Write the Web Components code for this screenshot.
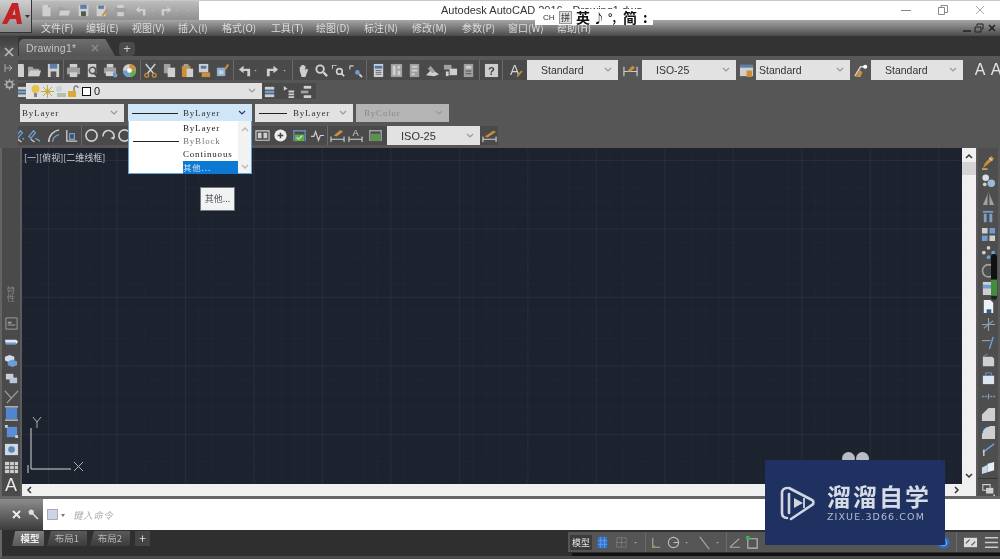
<!DOCTYPE html>
<html lang="zh">
<head>
<meta charset="utf-8">
<title>AutoCAD</title>
<style>
  html, body { margin: 0; padding: 0; overflow: hidden; background: #444; }
</style>
</head>
<body>
<cad-app></cad-app>
<script>
// icon drawings, all on a 16x16 box
const W = '#cfcfcf', G = '#a0a0a0', B = '#6d9dd2', O = '#c98f3a', D = '#3a3a3a', N = '#5fae4a';
const ICONS = {
  doc: `<path d="M3 1h7l3 3v11H3z" fill="${W}"/><path d="M10 1v3h3" fill="${G}"/>`,
  open: `<path d="M1 4h5l1 2h6v8H1z" fill="${G}"/><path d="M3 8h12l-2 6H1z" fill="${W}"/>`,
  save: `<path d="M2 1h12v14H2z" fill="${W}"/><path d="M4 1h8v5H4z" fill="#5b7fa8"/><path d="M5 9h6v6H5z" fill="#555"/>`,
  saveas: `<path d="M2 2h11v13H2z" fill="${W}"/><path d="M4 2h7v4H4z" fill="#5b7fa8"/><path d="M8 14l6-8 2 1-6 8z" fill="${O}"/>`,
  print: `<path d="M4 1h8v4H4z" fill="${W}"/><path d="M1 5h14v7H1z" fill="${G}"/><path d="M4 10h8v5H4z" fill="${W}"/>`,
  preview: `<path d="M3 1h9v14H3z" fill="${W}"/><circle cx="8" cy="8" r="3.4" fill="none" stroke="#555" stroke-width="1.6"/><path d="M10 11l3 3" stroke="#444" stroke-width="2"/>`,
  plot: `<path d="M4 1h7v4H4z" fill="${W}"/><path d="M1 5h13v6H1z" fill="${G}"/><path d="M3 9h8v5H3z" fill="${W}"/><circle cx="13" cy="13" r="2.4" fill="${B}"/>`,
  wheel: `<circle cx="8" cy="8" r="7" fill="${W}"/><path d="M8 1a7 7 0 0 1 7 7H8z" fill="${O}"/><path d="M15 8a7 7 0 0 1-7 7V8z" fill="${N}"/><path d="M8 15a7 7 0 0 1-7-7h7z" fill="${B}"/><circle cx="8" cy="8" r="2.5" fill="#fff"/>`,
  cut: `<path d="M3 1l8 10M13 1L5 11" stroke="${W}" stroke-width="1.6"/><circle cx="4" cy="13" r="2" fill="none" stroke="${O}" stroke-width="1.4"/><circle cx="12" cy="13" r="2" fill="none" stroke="${O}" stroke-width="1.4"/>`,
  copy: `<path d="M2 1h7v10H2z" fill="${G}"/><path d="M6 5h8v10H6z" fill="${W}"/>`,
  paste: `<path d="M2 3h9v12H2z" fill="${O}"/><path d="M4 1h5v3H4z" fill="${G}"/><path d="M7 6h7v9H7z" fill="${W}"/>`,
  match: `<path d="M2 1h10v9H2z" fill="${W}"/><path d="M4 3h6v3H4z" fill="#4a78b0"/><path d="M5 10h9v5H5z" fill="${O}"/>`,
  brush: `<path d="M2 5h9v9H2z" fill="#8fb0d8"/><path d="M4 8h5v4H4z" fill="${W}"/><path d="M10 6l3-5 2 1-3 5z" fill="${O}"/>`,
  undo: `<path d="M7 3L2 7l5 4V8.500h4V14h3V6H7z" fill="${W}"/>`,
  redo: `<path d="M9 3l5 4-5 4V8.500H5V14H2V6h7z" fill="${W}"/>`,
  caret: `<path d="M1 7h5l-2.500 3z" fill="#bbb"/>`,
  hand: `<path d="M4 8V4h1.500v3V2.500H7V7V2h1.500v5V3H10v5l1.500-2 1.500 1-3 8H6z" fill="${W}"/>`,
  zoom: `<circle cx="6.500" cy="6.500" r="4" fill="none" stroke="${W}" stroke-width="2"/><path d="M10 10l4 4" stroke="${W}" stroke-width="2.400"/>`,
  zwin: `<path d="M1 2h5v1H2v3H1z" fill="${W}"/><circle cx="9" cy="9" r="3" fill="none" stroke="${W}" stroke-width="1.800"/><path d="M11 11l3 3" stroke="${W}" stroke-width="2"/>`,
  zprev: `<path d="M2 3h4M2 3v4" stroke="${W}" stroke-width="1.200"/><circle cx="10" cy="10" r="2.500" fill="${B}"/><path d="M12 12l3 3" stroke="${W}" stroke-width="2"/>`,
  props: `<path d="M3 1h10v14H3z" fill="${W}"/><path d="M4 3h8v3H4z" fill="#3e78bb"/><path d="M5 8h6M5 10h6M5 12h6" stroke="#666"/>`,
  design: `<path d="M2 1h12v14H2z" fill="${G}"/><path d="M4 3h3v10H4zM9 3h3v3H9zM9 8h3v5H9z" fill="${W}"/>`,
  tool: `<path d="M3 1h10v14H3z" fill="${G}"/><path d="M5 3h6v2H5zM5 7h6v2H5zM5 11h3v2H5z" fill="${W}"/>`,
  sheet: `<path d="M1 13l6-6 8 5-5 2z" fill="${W}"/><path d="M6 3l5 6-3 2-5-5z" fill="${G}"/>`,
  markup: `<path d="M1 2h8v5H1z" fill="${G}"/><path d="M7 6h8v7H7z" fill="${W}"/><path d="M3 9h3v5H3z" fill="${W}"/>`,
  calc: `<path d="M3 1h10v14H3z" fill="${G}"/><path d="M5 3h6v3H5z" fill="${W}"/><path d="M5 8h6v1H5zM5 11h6v1H5z" fill="#555"/>`,
  help: `<path d="M1 1h14v14H1z" fill="${W}"/><text x="8" y="13" font-size="12" font-weight="700" font-family="Liberation Sans" text-anchor="middle" fill="#444">?</text>`,
  tstyle: `<text x="7" y="13" font-size="15" font-family="Liberation Sans" text-anchor="middle" fill="${W}">A</text><path d="M9 14l5-6 1.500 1-5 6z" fill="${O}"/>`,
  dstyle: `<path d="M1 4v10M15 4v10M1 9h14" stroke="${W}" stroke-width="1.200"/><path d="M4 9l6-6 3 2-5 4z" fill="${O}"/>`,
  tstyle2: `<path d="M1 2h14v12H1z" fill="${W}"/><path d="M1 2h14v3H1z" fill="#5b7fa8"/><path d="M8 8l6 0 0 7-6 0z" fill="${O}"/>`,
  mstyle: `<path d="M2 14L8 4h5" fill="none" stroke="${W}" stroke-width="1.600"/><circle cx="13" cy="4" r="2.200" fill="#fff"/><path d="M3 15l4-8 3 3-2 5z" fill="${O}"/>`,
  lstate: `<path d="M2 3h10v3H2z" fill="${W}"/><path d="M2 7h10v3H2z" fill="${B}"/><path d="M2 11h10v3H2z" fill="${W}"/>`,
  lprev: `<path d="M3 2l4 3-4 2z" fill="${W}"/><path d="M8 7h6v2H8zM8 10h6v2H8zM8 13h6v2H8z" fill="${W}"/>`,
  lmake: `<path d="M5 2h8v3H5z" fill="${W}"/><path d="M2 7h8v3H2z" fill="${G}"/><path d="M5 12h8v3H5z" fill="${W}"/>`,
  dlin: `<path d="M2 9l5-6 2 2-5 6zM9 11l5 3" stroke="${B}" stroke-width="1.400" fill="none"/><path d="M4 12l4 3" stroke="${W}" stroke-width="1.400"/>`,
  darc: `<path d="M3 15C3 8 8 3 14 2" fill="none" stroke="${W}" stroke-width="1.600"/><path d="M7 15c0-4 3-7 7-8" fill="none" stroke="${B}" stroke-width="1.400"/>`,
  dord: `<path d="M3 2v12h11" fill="none" stroke="${W}" stroke-width="1.400"/><path d="M6 6h5v6H6z" fill="none" stroke="${B}" stroke-width="1.400"/>`,
  circ: `<circle cx="8" cy="8" r="6" fill="none" stroke="${W}" stroke-width="1.800"/>`,
  arc2: `<path d="M2 9a6 6 0 1 1 11 3" fill="none" stroke="${W}" stroke-width="1.800"/><path d="M13 12l-3-1 3-2z" fill="${W}"/>`,
  box50: `<path d="M1 3h14v10H1z" fill="none" stroke="${W}" stroke-width="1.200"/><path d="M3 5h4v6H3zM9 5h4v6H9z" fill="${W}"/>`,
  cplus: `<circle cx="8" cy="8" r="6.500" fill="#eee"/><path d="M5 8h6M8 5v6" stroke="#444" stroke-width="1.600"/>`,
  check: `<path d="M2 2v12M14 2v12M2 3h12" stroke="${B}" stroke-width="1.200"/><path d="M3 7h10v7H3z" fill="${N}"/><path d="M5 10l2 2 4-4" fill="none" stroke="#cde" stroke-width="1.200"/>`,
  wave: `<path d="M1 9h3l2-5 3 9 2-5h4" fill="none" stroke="${W}" stroke-width="1.300"/>`,
  dedit: `<path d="M1 9v6M15 9v6M1 12h14" stroke="${W}" stroke-width="1.200"/><path d="M4 8l7-6 3 2-7 5z" fill="${O}"/>`,
  dtext: `<path d="M1 9v6M15 9v6M1 12h14" stroke="${W}" stroke-width="1.200"/><text x="8" y="9" font-size="10" font-family="Liberation Sans" text-anchor="middle" fill="${W}">A</text>`,
  dupd: `<path d="M2 2v12M14 2v12M2 3h12" stroke="${W}" stroke-width="1"/><path d="M3 6h10v8H3z" fill="#5d9150"/>`,
  dlast: `<path d="M1 9v6M15 9v6M1 12h14" stroke="${W}" stroke-width="1.200"/><path d="M3 9l9-6 3 1-9 6z" fill="${O}"/>`,
  // docks
  cloud: `<path d="M1 6h12l2 2-2 3H2z" fill="#dfe8f2"/><path d="M2 10h11" stroke="${B}" stroke-width="2"/>`,
  cubes: `<path d="M6 2l5 2v4l-5 2-5-2V4z" fill="#cfdced"/><path d="M9 7l5 2v4l-5 2-5-2V9z" fill="${B}"/>`,
  blocks: `<path d="M2 3h8v6H2z" fill="${W}"/><path d="M6 7h8v6H6z" fill="#b5c8dd"/>`,
  xline: `<path d="M1 2l7 8M15 2L3 15" stroke="${G}" stroke-width="1.300"/>`,
  rect1: `<path d="M2 2h12v12H2z" fill="#4f86cf"/><path d="M1 1h14M1 15h14" stroke="${W}" stroke-width="1.400"/>`,
  rect2: `<path d="M3 3h11v11H3z" fill="#5a8fd6"/><path d="M1 1h3v3H1zM12 12h3v3h-3z" fill="${W}"/>`,
  photo: `<path d="M1 2h14v12H1z" fill="#cfd8e3"/><circle cx="8" cy="8" r="3.500" fill="#5c86b5"/>`,
  table: `<path d="M1 2h14v12H1z" fill="${W}"/><path d="M1 6h14M1 10h14M6 2v12M11 2v12" stroke="#555"/>`,
  pal: `<path d="M2 2h12v12H2z" fill="none" stroke="${G}"/><path d="M4 6h4v2H4zM4 9h8v1H4z" fill="${G}"/>`,
  pencil: `<path d="M2 14l2-5 7-8 3 3-8 7z" fill="${O}"/><path d="M9 3l3 3" stroke="${W}" stroke-width="1.500"/><path d="M1 15h6" stroke="#d9c34a" stroke-width="1.500"/>`,
  spots: `<circle cx="5" cy="5" r="3.500" fill="#d8dee6"/><circle cx="11" cy="11" r="4" fill="#9db9da"/><circle cx="4" cy="12" r="2" fill="${W}"/>`,
  tri: `<path d="M8 1l6 14H9V5zM8 1L2 15h5V5z" fill="${G}"/>`,
  array: `<path d="M3 5h3v9H3zM9 5h3v9H9z" fill="#7f9fc5"/><path d="M2 2h11v2H2z" fill="${B}"/>`,
  grid4: `<path d="M1 1h6v6H1zM9 9h6v6H9z" fill="${W}"/><path d="M9 1h6v6H9zM1 9h6v6H1z" fill="${B}"/>`,
  move: `<circle cx="8" cy="3" r="2" fill="${W}"/><circle cx="3" cy="8" r="2" fill="${W}"/><circle cx="13" cy="8" r="2" fill="${B}"/><circle cx="8" cy="13" r="2" fill="${B}"/>`,
  rot: `<path d="M13 4a6.500 6.500 0 1 0 1 7" fill="none" stroke="${G}" stroke-width="1.800"/>`,
  sheet2: `<path d="M2 1h12v14H2z" fill="${W}"/><path d="M2 4h12v4H2z" fill="${B}"/>`,
  page: `<path d="M3 1h7l3 3v11H3z" fill="#eef2f7"/><path d="M6 11h5v4H6z" fill="#335f95"/>`,
  flat: `<path d="M2 4h10l2 2v8H2z" fill="${W}"/><path d="M2 4l5-3" stroke="${B}"/>`,
  flat2: `<path d="M2 5h12v9H2z" fill="#dce6f1"/><path d="M5 5V2h6v3" fill="none" stroke="${B}"/>`,
  dash: `<path d="M1 8h14" stroke="${B}" stroke-width="1.400" stroke-dasharray="2 1"/><path d="M8 5v6" stroke="${G}"/>`,
  cham: `<path d="M1 15V8l7-7h7v14z" fill="${W}"/>`,
  fill: `<path d="M1 15V9a8 8 0 0 1 8-8h6v14z" fill="${W}"/><path d="M1 9a8 8 0 0 1 8-8" fill="none" stroke="#2f5e92" stroke-width="1.500"/>`,
  mix: `<path d="M2 11l8-6 4-3" stroke="${B}" stroke-width="1.800"/><path d="M3 8v7" stroke="${W}" stroke-width="1.500"/>`,
  three: `<path d="M1 8l6-3v8l-6 2z" fill="#c6d7ea"/><path d="M7 4l7-2v9l-7 2z" fill="#e6eef7"/>`,
  stack: `<path d="M1 2h9v7H1z" fill="none" stroke="${W}" stroke-width="1.300"/><path d="M5 6h9v7H5z" fill="${W}"/><path d="M14 14h2v2h-2z" fill="${W}"/>`,
  yline: `<path d="M8 1v14M1 8h14" stroke="${G}" stroke-width="1.200"/><path d="M3 12L13 4" stroke="${B}" stroke-width="1.200"/>`,
  zline: `<path d="M1 6h9" stroke="${G}" stroke-width="1.200"/><path d="M13 2L9 15" stroke="${B}" stroke-width="1.600"/>`,
  // status bar
  sgrid: `<path d="M3 2h10v12H3z" fill="#2f74d0"/><path d="M3 6h10M3 10h10M6 2v12M10 2v12" stroke="#6aa2e8" stroke-width=".8"/>`,
  ssnap: `<path d="M3 3h10v10H3z" fill="none" stroke="#999" stroke-dasharray="1 1"/><path d="M3 8h10M8 3v10" stroke="#999" stroke-dasharray="1 1"/>`,
  sortho: `<path d="M4 3v10h8" fill="none" stroke="#aaa" stroke-width="1.200"/><path d="M4 13h2v-2" stroke="${O}" fill="none"/>`,
  spolar: `<circle cx="8" cy="8" r="5.500" fill="none" stroke="#bbb" stroke-width="1.200"/><path d="M8 8h5" stroke="#bbb" stroke-width="1.200"/>`,
  siso: `<path d="M3 2l10 13" stroke="#aaa" stroke-width="1.200"/>`,
  sang: `<path d="M2 13L12 4M2 13h11" fill="none" stroke="#aaa" stroke-width="1.100"/>`,
  sbox: `<path d="M3 4h10v10H3z" fill="none" stroke="#bbb" stroke-width="1.200"/><path d="M1 1h4v4H1z" fill="#37b24d"/>`,
  sfull: `<path d="M1 3h14v10H1z" fill="#ddd"/><path d="M3 9l4-4M9 11l4-4" stroke="#555" stroke-width="1.300"/>`,
  smenu: `<path d="M1 3h14M1 8h14M1 13h14" stroke="#ccc" stroke-width="1.600"/>`,
  sblue: `<circle cx="8" cy="8" r="6.500" fill="#2870c8"/><circle cx="8" cy="8" r="3.500" fill="none" stroke="#7eb0ea"/>`
};

class CadIcon extends HTMLElement {
  connectedCallback() {
    const w = this.getAttribute('w') || 18;
    const h = this.getAttribute('h');
    const s = this.getAttribute('s') || 15;
    this.attachShadow({ mode: 'open' });
    this.shadowRoot.innerHTML = `
      <style>
        :host { display: flex; flex: none; align-items: center; justify-content: center; width: ${w}px; height: ${h ? h + 'px' : '100%'}; overflow: hidden; }
        svg { flex: none; display: block; }
      </style>
      <svg width="${s}" height="${s}" viewBox="0 0 16 16">${ICONS[this.getAttribute('name')] || ''}</svg>
    `;
  }
}
customElements.define('cad-icon', CadIcon);

// strip of icons: "name:size name:size", sep = thin divider, gap = empty space
class CadIconbar extends HTMLElement {
  connectedCallback() {
    const s = this.getAttribute('s') || 15;
    const column = this.getAttribute('dir') === 'column';
    const html = this.getAttribute('items').trim().split(/\s+/).map(t => {
      const [n, w] = t.split(':');
      if (n === 'sep') return `<i class="sep" style="width:${w}px"></i>`;
      if (n === 'gap') return `<i style="width:${w}px;flex:none"></i>`;
      if (column) return `<cad-icon name="${n}" w="20" h="${w}" s="${s}"></cad-icon>`;
      return `<cad-icon name="${n}" w="${w}" s="${n === 'caret' ? 7 : s}"></cad-icon>`;
    }).join('');
    this.attachShadow({ mode: 'open' });
    this.shadowRoot.innerHTML = `
      <style>
        :host { display: flex; flex: none; height: ${column ? 'auto' : '100%'}; flex-direction: ${column ? 'column' : 'row'}; }
        .sep { flex: none; position: relative; }
        .sep::after { content: ''; display: block; width: 1px; height: 100%; margin: 0 auto; background: #6a6a6a; }
      </style>
      ${html}
    `;
  }
}
customElements.define('cad-iconbar', CadIconbar);

class CadCombo extends HTMLElement {
  connectedCallback() {
    const w = this.getAttribute('w');
    const state = this.getAttribute('state') || '';
    const bg = state === 'open' ? '#cfe6f8' : state === 'off' ? '#b4b4b4' : '#e2e2e2';
    const col = state === 'off' ? '#888' : '#333';
    this.attachShadow({ mode: 'open' });
    this.shadowRoot.innerHTML = `
      <style>
        :host { display: flex; flex: none; width: ${w}px; height: 100%; box-sizing: border-box; align-items: center; background: ${bg}; color: ${col}; padding-left: ${this.getAttribute('pad') || 4}px; font: ${this.getAttribute('font') || '10.500px "Liberation Sans"'}; letter-spacing: ${this.getAttribute('ls') || 0}px; white-space: nowrap; }
        .body { flex: 1; display: flex; align-items: center; min-width: 0; }
        svg { flex: none; margin-right: 6px; }
      </style>
      <div class="body"><slot></slot></div>
      <svg width="8" height="6" viewBox="0 0 8 6"><path d="M1 1l3 3 3-3" fill="none" stroke="${state === 'open' ? '#336' : '#999'}" stroke-width="1.200"/></svg>
    `;
  }
}
customElements.define('cad-combo', CadCombo);

class CadTitlebar extends HTMLElement {
  connectedCallback() {
    this.attachShadow({ mode: 'open' });
    this.shadowRoot.innerHTML = `
      <style>
        :host { display: flex; flex: none; height: 20px; background: #fff; border-top: 1px solid #c8c8c8; box-sizing: border-box; }
        .qat { flex: none; box-sizing: border-box; width: 199px; padding-left: 37px; background: linear-gradient(#bdbdbd, #8f8f8f); display: flex; height: 19px; }
        .title { flex: 1; font: 11px "Liberation Sans"; color: #333; padding-left: 242px; line-height: 18px; white-space: nowrap; overflow: hidden; }
        .btns { display: flex; flex: none; width: 113px; color: #999; }
        .btns span { width: 37px; text-align: center; font: 13px/18px "Liberation Sans"; }
        svg { display: block; margin: 4px auto; }
      </style>
      <div class="qat"><cad-iconbar s="13" items="doc:18 open:19 save:18 saveas:19 print:19 undo:20 caret:8 redo:16 caret:9 caret:12"></cad-iconbar></div>
      <div class="title">Autodesk AutoCAD 2016 - Drawing1.dwg</div>
      <div class="btns">
        <span><svg width="10" height="10"><path d="M0 5.500h10" stroke="#888"/></svg></span>
        <span><svg width="10" height="10"><path d="M.5 2.500h6v7h-6zM3 2.500V.5h6.500v7H7" fill="none" stroke="#888"/></svg></span>
        <span><svg width="10" height="10"><path d="M1 1l8 8M9 1L1 9" stroke="#aaa"/></svg></span>
      </div>
    `;
  }
}
customElements.define('cad-titlebar', CadTitlebar);

class CadMenubar extends HTMLElement {
  connectedCallback() {
    const items = [['文件(F)', 45], ['编辑(E)', 46], ['视图(V)', 46], ['插入(I)', 44], ['格式(O)', 49], ['工具(T)', 45], ['绘图(D)', 48], ['标注(N)', 48], ['修改(M)', 50], ['参数(P)', 46], ['窗口(W)', 49], ['帮助(H)', 47]];
    this.attachShadow({ mode: 'open' });
    this.shadowRoot.innerHTML = `
      <style>
        :host { display: flex; flex: none; height: 16px; align-items: center; padding: 0 0 1px 41px; box-sizing: border-box; background: linear-gradient(#a6a6a6, #4a4a4a); font: 10px "Noto Sans CJK SC", "Liberation Sans", sans-serif; color: #dcdcdc; white-space: nowrap; }
        span { flex: none; }
        .ctl { margin-left: auto; display: flex; gap: 2px; padding-right: 3px; }
      </style>
      ${items.map(([t, w]) => `<span style="width:${w}px">${t}</span>`).join('')}
      <div class="ctl">
        <svg width="10" height="10"><path d="M1 8h8" stroke="#222" stroke-width="1.500"/></svg>
        <svg width="11" height="10"><path d="M1 4h6v5H1zM3 3V1h6v5H8" fill="none" stroke="#222"/></svg>
        <svg width="10" height="10"><path d="M2 2l6 6M8 2L2 8" stroke="#222" stroke-width="1.600"/></svg>
      </div>
    `;
  }
}
customElements.define('cad-menubar', CadMenubar);

class CadTabs extends HTMLElement {
  connectedCallback() {
    this.attachShadow({ mode: 'open' });
    this.shadowRoot.innerHTML = `
      <style>
        :host { display: flex; flex: none; height: 24px; align-items: flex-end; box-sizing: border-box; padding: 0 0 4px 1px; gap: 4px; background: linear-gradient(#333 0, #333 20px, #585858 20px); font: 10.500px "Liberation Sans"; color: #c4c4c4; }
        .tab { width: 96px; height: 17px; box-sizing: border-box; padding: 0 0 0 7px; display: flex; align-items: center; justify-content: space-between; background: linear-gradient(#6e6e6e, #555); border-radius: 5px 5px 0 0; clip-path: polygon(0 0, 90% 0, 100% 100%, 0 100%); letter-spacing: .2px; }
        .tab svg { margin-right: 16px; }
        .plus { width: 16px; height: 14px; background: #4a4a4a; border-radius: 4px; text-align: center; line-height: 13px; font-size: 13px; color: #ccc; }
      </style>
      <div class="tab">Drawing1*<svg width="8" height="8"><path d="M1 1l6 6M7 1L1 7" stroke="#888" stroke-width="1.600"/></svg></div>
      <div class="plus">+</div>
    `;
  }
}
customElements.define('cad-tabs', CadTabs);

class CadToolbars extends HTMLElement {
  connectedCallback() {
    const mono = '9px "Liberation Serif"';
    this.attachShadow({ mode: 'open' });
    this.shadowRoot.innerHTML = `
      <style>
        :host { display: flex; flex-direction: column; flex: none; height: 88px; box-sizing: border-box; padding-bottom: 2px; background: #565656; }
        .row { display: flex; flex: none; }
        .r1 { height: 20px; }
        .r2 { height: 16px; margin-top: 3px; }
        .r3 { height: 18px; margin-top: 5px; padding-left: 2px; }
        .r4 { height: 19px; margin-top: 4px; }
        .dark { display: flex; height: 100%; background: #4a4a4a; }
        .a { color: #e4e4e4; font: 16px "Liberation Sans"; width: 16px; text-align: center; line-height: 20px; flex: none; }
        .lyr { display: flex; align-items: center; gap: 0; font: 11px "Liberation Sans"; color: #222; }
        .sq { width: 7px; height: 7px; border: 1px solid #111; background: #fff; margin: 0 3px 0 2px; }
        .line { display: inline-block; width: 46px; height: 1px; background: #222; margin-right: 5px; flex: none; }
        .line.s { width: 28px; margin-right: 6px; }
      </style>
      <div class="row r1">
        <div class="dark">
          <cad-iconbar items="doc:6 open:20 save:18 sep:2 print:19 preview:18 plot:18 wheel:20 sep:2 cut:19 copy:18 paste:18 match:17 brush:19 sep:2 undo:20 caret:7 redo:22 caret:7 sep:4 hand:19 zoom:17 zwin:17 zprev:17 sep:5 props:18 design:18 tool:18 sheet:18 markup:18 calc:18 sep:4 help:20 sep:3"></cad-iconbar>
          <cad-icon name="tstyle" w="23"></cad-icon>
        </div>
        <cad-combo w="91" pad="14">Standard</cad-combo>
        <cad-icon name="dstyle" w="24"></cad-icon>
        <cad-combo w="94" pad="14">ISO-25</cad-combo>
        <cad-icon name="tstyle2" w="20"></cad-icon>
        <cad-combo w="94" pad="3">Standard</cad-combo>
        <cad-icon name="mstyle" w="21"></cad-icon>
        <cad-combo w="92" pad="14">Standard</cad-combo>
        <span class="a" style="margin-left:9px">A</span>
        <span class="a" style="width:16px">A</span>
      </div>
      <div class="row r2">
        <div class="dark">
          <cad-icon name="lstate" w="8"></cad-icon>
          <cad-combo w="236" pad="4">
            <span class="lyr">
              <svg width="11" height="14" viewBox="0 0 11 14"><circle cx="5.500" cy="5" r="4" fill="#e8c34a"/><path d="M4 9h3v4H4z" fill="#888"/></svg>
              <svg width="13" height="13" viewBox="0 0 13 13"><circle cx="6.500" cy="6.500" r="3" fill="#e6cf7a"/><path d="M6.500 0v13M0 6.500h13M2 2l9 9M11 2l-9 9" stroke="#c2a94e"/></svg>
              <svg width="13" height="13" viewBox="0 0 13 13"><circle cx="5" cy="4" r="3" fill="#c9d1d8"/><path d="M3 8h9v4H3z" fill="#b5c2a8"/></svg>
              <svg width="13" height="13" viewBox="0 0 13 13"><path d="M1 6h8v6H1z" fill="#d8a93c"/><path d="M7 6V3a2 2 0 0 1 4 0" fill="none" stroke="#777" stroke-width="1.300"/></svg>
              <i class="sq"></i>0
            </span>
          </cad-combo>
          <cad-iconbar items="lstate:17 lprev:18 lmake:19"></cad-iconbar>
        </div>
      </div>
      <div class="row r3">
        <cad-combo w="104" pad="2" font='${mono}' ls=".8">ByLayer</cad-combo>
        <cad-combo w="124" pad="4" font='${mono}' ls=".8" state="open" style="margin-left:4px"><i class="line"></i><span>ByLayer</span></cad-combo>
        <cad-combo w="98" pad="4" font='${mono}' ls=".8" style="margin-left:3px"><i class="line s"></i><span>ByLayer</span></cad-combo>
        <cad-combo w="93" pad="8" font='${mono}' ls=".8" state="off" style="margin-left:3px">ByColor</cad-combo>
      </div>
      <div class="row r4">
        <div class="dark">
          <cad-iconbar items="dlin:6 dlin:20 darc:18 dord:18 sep:3 circ:17 arc2:16 circ:16 gap:122 box50:17 cplus:19 check:18 wave:18 sep:2 dedit:18 dtext:19 dupd:20 gap:2"></cad-iconbar>
          <cad-combo w="93" pad="14" font='11px "Liberation Sans"'>ISO-25</cad-combo>
          <cad-icon name="dlast" w="18"></cad-icon>
        </div>
      </div>
    `;
  }
}
customElements.define('cad-toolbars', CadToolbars);

class CadPalette extends HTMLElement {
  connectedCallback() {
    this.attachShadow({ mode: 'open' });
    this.shadowRoot.innerHTML = `
      <style>
        :host { display: flex; flex: none; width: 18px; flex-direction: column; align-items: center; box-sizing: border-box; padding-top: 11px; gap: 6px; background: linear-gradient(#3c3c3c, #565656 16px); }
        svg { display: block; }
      </style>
      <svg width="10" height="10"><path d="M1 1l8 8M9 1L1 9" stroke="#bbb" stroke-width="1.600"/></svg>
      <svg width="10" height="10"><path d="M1 1v8M1 5h6M5 2l3 3-3 3" fill="none" stroke="#aaa"/></svg>
      <svg width="11" height="11" viewBox="0 0 16 16"><circle cx="8" cy="8" r="4.500" fill="none" stroke="#aaa" stroke-width="2.500"/><path d="M8 0v16M0 8h16M2 2l12 12M14 2L2 14" stroke="#aaa" stroke-width="1.500" stroke-dasharray="3 10"/></svg>
    `;
  }
}
customElements.define('cad-palette', CadPalette);

class CadDock extends HTMLElement {
  connectedCallback() {
    this.attachShadow({ mode: 'open' });
    this.shadowRoot.innerHTML = `
      <style>
        :host { display: flex; flex: none; flex-direction: column; align-items: center; box-sizing: border-box; }
      </style>
      <slot></slot>
    `;
  }
}
customElements.define('cad-dock', CadDock);

class CadViewport extends HTMLElement {
  connectedCallback() {
    this.attachShadow({ mode: 'open' });
    this.shadowRoot.innerHTML = `
      <style>
        :host { display: block; position: relative; flex: 1; overflow: hidden;
          background-color: #1d232e;
          background-image:
            linear-gradient(90deg, rgba(160,180,200,.05) 1px, transparent 1px),
            linear-gradient(rgba(160,180,200,.05) 1px, transparent 1px),
            linear-gradient(90deg, rgba(160,180,200,.018) 1px, transparent 1px),
            linear-gradient(rgba(160,180,200,.018) 1px, transparent 1px);
          background-size: 68.500px 68.500px, 68.500px 68.500px, 13.700px 13.700px, 13.700px 13.700px;
          background-position: 26px 12px, 26px 12px, 26px 12px, 26px 12px; }
        .label { position: absolute; left: 2px; top: 3px; font: 9px "Noto Sans CJK SC", sans-serif; color: #c8ccd2; white-space: nowrap; }
        .ucs { position: absolute; left: 4px; bottom: 6px; }
      </style>
      <div class="label">[一][俯视][二维线框]</div>
      <svg class="ucs" width="66" height="62" viewBox="0 0 66 62">
        <path d="M5 12v41h40" fill="none" stroke="#d4d6d8"/>
        <path d="M2 49v8" stroke="#d4d6d8"/>
        <path d="M7 1l4 5 4-5M11 6v6" fill="none" stroke="#aab0b6"/>
        <path d="M48 46l9 9M57 46l-9 9" stroke="#aab0b6"/>
      </svg>
    `;
  }
}
customElements.define('cad-viewport', CadViewport);

class CadWorkspace extends HTMLElement {
  connectedCallback() {
    const ar = (d) => `<svg width="8" height="8" viewBox="0 0 8 8"><path d="${d}" fill="none" stroke="#333" stroke-width="1.500"/></svg>`;
    this.attachShadow({ mode: 'open' });
    this.shadowRoot.innerHTML = `
      <style>
        :host { display: flex; flex: none; height: 348px; background: #5a5a5a; }
        .ld { width: 22px; padding-top: 138px; background: #4a4a4a; border-left: 2px solid #636363; border-right: 2px solid #5c5c5c; }
        .main { flex: 1; min-width: 0; display: flex; flex-direction: column; }
        .top { flex: 1; display: flex; min-height: 0; }
        .vs { flex: none; width: 14px; background: #f0f0f0; display: flex; flex-direction: column; align-items: center; justify-content: space-between; padding: 4px 0; box-sizing: border-box; position: relative; }
        .vs::after { content: ''; position: absolute; left: 0; right: 0; top: 14px; height: 13px; background: #d4d4d4; }
        .hs { flex: none; height: 12px; background: #f0f0f0; display: flex; align-items: center; justify-content: space-between; padding: 0 15px 0 3px; }
        .rd { width: 20px; margin: 0 2px; background: #4e4e4e; padding-top: 5px; position: relative; }
        .label { writing-mode: vertical-rl; font: 8px "Noto Sans CJK SC", sans-serif; color: #8a8a8a; height: 24px; margin-bottom: 4px; flex: none; }
        .cap { position: absolute; left: 13px; top: 106px; width: 6px; height: 46px; border-radius: 4px; background: linear-gradient(#111 0, #111 55%, #3d8f3d 56%, #3d8f3d 90%, #222 91%); }
        .sep2 { width: 100%; height: 1px; background: #333; margin: 1px 0 3px; flex: none; }
      </style>
      <cad-dock class="ld">
        <div class="label">特性</div>
        <cad-iconbar dir="column" s="15" items="pal:18 cloud:19 cubes:18 blocks:18 xline:18 rect1:17 rect2:18 photo:18 table:18"></cad-iconbar>
        <div style="font:18px 'Liberation Sans';color:#e8e8e8;line-height:18px;flex:none">A</div>
      </cad-dock>
      <div class="main">
        <div class="top">
          <cad-viewport></cad-viewport>
          <div class="vs">${ar('M1 6l3-3 3 3')}${ar('M1 2l3 3 3-3')}</div>
        </div>
        <div class="hs">${ar('M6 1L3 4l3 3')}${ar('M2 1l3 3-3 3')}</div>
      </div>
      <cad-dock class="rd">
        <cad-iconbar dir="column" s="15" items="pencil:18 spots:18 tri:18 array:18 grid4:18 move:18 rot:18 sheet2:18 page:18 yline:18 zline:18 flat:18 flat2:18 dash:18 cham:18 fill:18 mix:17 three:19"></cad-iconbar>
        <div class="sep2"></div>
        <cad-icon name="stack" w="20" h="14" s="13"></cad-icon>
        <div class="cap"></div>
      </cad-dock>
    `;
  }
}
customElements.define('cad-workspace', CadWorkspace);

class CadCommand extends HTMLElement {
  connectedCallback() {
    this.attachShadow({ mode: 'open' });
    this.shadowRoot.innerHTML = `
      <style>
        :host { display: flex; flex: none; height: 34px; box-sizing: border-box; padding-top: 3px; background: #666; }
        .grip { flex: none; width: 43px; padding-left: 12px; box-sizing: border-box; display: flex; align-items: center; gap: 7px; background: linear-gradient(#8c8c8c, #3c3c3c); }
        .input { flex: 1; background: #fff; display: flex; align-items: center; padding-left: 4px; font: italic 9.500px "Noto Sans CJK SC", sans-serif; color: #aaa; letter-spacing: .6px; }
        .pr { width: 11px; height: 11px; background: #cdd4e6; border: 1px solid #aab; box-sizing: border-box; margin-right: 2px; flex: none; }
        .c { width: 0; height: 0; border: 2.500px solid transparent; border-top: 3px solid #777; margin: 3px 8px 0 1px; flex: none; }
      </style>
      <div class="grip">
        <svg width="9" height="9"><path d="M1 1l7 7M8 1L1 8" stroke="#eee" stroke-width="1.800"/></svg>
        <svg width="11" height="11" viewBox="0 0 11 11"><path d="M10 10L4 4M2 1l3 1 0 3-3 0-1-3" fill="#ddd" stroke="#ddd" stroke-width="1.500"/></svg>
      </div>
      <div class="input"><i class="pr"></i><i class="c"></i>键入命令</div>
    `;
  }
}
customElements.define('cad-command', CadCommand);

class CadStatus extends HTMLElement {
  connectedCallback() {
    this.attachShadow({ mode: 'open' });
    this.shadowRoot.innerHTML = `
      <style>
        :host { display: flex; flex: none; height: 29px; background: #2f2f2f; font: 9.500px "Noto Sans CJK SC", sans-serif; color: #b8b8b8; box-sizing: border-box; border-left: 2px solid #666; border-bottom: 3px solid #4a4a4a; }
        .tabs { display: flex; gap: 3px; height: 15px; padding: 1px 0 0 10px; flex: none; }
        .t { width: 40px; text-align: center; background: linear-gradient(#5a5a5a, #3c3c3c); clip-path: polygon(10% 0, 100% 0, 100% 100%, 0 100%); line-height: 15px; }
        .t.on { background: linear-gradient(#7c7c7c, #5a5a5a); color: #eee; font-weight: 700; width: 28px; padding-left: 4px; }
        .p { width: 15px; text-align: center; background: #444; color: #ddd; font-size: 12px; line-height: 14px; margin-left: 2px; }
        .r { margin-left: auto; width: 432px; flex: none; display: flex; flex-direction: column; }
        .bar { height: 20px; margin-top: 2px; background: #555; display: flex; align-items: center; }
        .m { width: 22px; margin: 0 1px 0 2px; background: #3c3c3c; color: #e4e4e4; font-size: 9px; line-height: 15px; text-align: center; flex: none; }
        .blk { height: 3px; margin: 1px 0 0 4px; background: #111; }
      </style>
      <div class="tabs">
        <div class="t on">模型</div>
        <div class="t">布局1</div>
        <div class="t">布局2</div>
        <div class="p">+</div>
      </div>
      <div class="r">
        <div class="bar">
          <span class="m">模型</span>
          <cad-iconbar items="sgrid:18 ssnap:20 caret:12 sep:4 sortho:18 spolar:17 caret:12 siso:20 caret:10 sep:4 sang:14 sbox:21 gap:170 sblue:20 sep:6 sfull:22 smenu:20"></cad-iconbar>
        </div>
        <div class="blk"></div>
      </div>
    `;
  }
}
customElements.define('cad-status', CadStatus);

// the open linetype list
class CadDropdown extends HTMLElement {
  connectedCallback() {
    this.attachShadow({ mode: 'open' });
    this.shadowRoot.innerHTML = `
      <style>
        :host { position: absolute; left: 128px; top: 121px; width: 124px; height: 53px; box-sizing: border-box; background: #fff; border: 1px solid #5aa7e0; border-top: 0; display: flex; font: 9px "Liberation Serif"; letter-spacing: .8px; color: #222; }
        .list { flex: 1; display: flex; flex-direction: column; padding-top: 1px; }
        .it { height: 13px; line-height: 13px; display: flex; flex: none; }
        .ln { width: 54px; flex: none; position: relative; }
        .ln i { position: absolute; left: 4px; right: 4px; top: 6px; height: 1px; background: #222; }
        .tx { flex: 1; padding-left: 0; }
        .sel { background: #0b78d4; color: #cfe4f6; font-family: "Noto Sans CJK SC", sans-serif; font-size: 8.500px; }
        .sb { width: 13px; flex: none; background: #f2f2f2; display: flex; flex-direction: column; align-items: center; justify-content: space-between; padding: 5px 0 3px; box-sizing: border-box; }
      </style>
      <div class="list">
        <div class="it"><span class="ln"></span><span class="tx">ByLayer</span></div>
        <div class="it"><span class="ln"><i></i></span><span class="tx" style="color:#777">ByBlock</span></div>
        <div class="it"><span class="ln"></span><span class="tx">Continuous</span></div>
        <div class="it"><span class="ln"></span><span class="tx sel">其他...</span></div>
      </div>
      <div class="sb">
        <svg width="8" height="6"><path d="M1 5l3-3 3 3" fill="none" stroke="#bbb" stroke-width="1.500"/></svg>
        <svg width="8" height="6"><path d="M1 1l3 3 3-3" fill="none" stroke="#bbb" stroke-width="1.500"/></svg>
      </div>
    `;
  }
}
customElements.define('cad-dropdown', CadDropdown);

class CadTooltip extends HTMLElement {
  connectedCallback() {
    this.attachShadow({ mode: 'open' });
    this.shadowRoot.innerHTML = `
      <style>
        :host { position: absolute; left: 200px; top: 187px; width: 35px; height: 24px; background: #f0f2f4; border: 1px solid #777; box-sizing: border-box; font: 9px/22px "Noto Sans CJK SC", sans-serif; color: #555; text-align: center; }
      </style>
      其他...
    `;
  }
}
customElements.define('cad-tooltip', CadTooltip);

class CadIme extends HTMLElement {
  connectedCallback() {
    this.attachShadow({ mode: 'open' });
    this.shadowRoot.innerHTML = `
      <style>
        :host { position: absolute; left: 535px; top: 9px; width: 118px; height: 16px; background: #fff; display: flex; align-items: center; font: 700 14px "Noto Sans CJK SC", sans-serif; color: #111; white-space: nowrap; }
        .ch { font: 8px "Liberation Sans"; color: #333; margin-left: 8px; width: 16px; flex: none; }
        .pin { width: 13px; height: 13px; font: 400 9px/11px "Noto Sans CJK SC", sans-serif; background: #ddd; border: 1px solid #999; text-align: center; box-sizing: border-box; margin-right: 4px; color: #333; flex: none; }
        span.g { flex: none; width: 17px; }
      </style>
      <span class="ch">CH</span><span class="pin">拼</span>
      <span class="g">英</span><span class="g" style="width:15px;font-size:12px">♪</span><span class="g" style="font-size:11px;width:15px">°,</span><span class="g" style="width:20px">简</span><span class="g" style="width:6px">:</span>
    `;
  }
}
customElements.define('cad-ime', CadIme);

class CadWatermark extends HTMLElement {
  connectedCallback() {
    this.attachShadow({ mode: 'open' });
    this.shadowRoot.innerHTML = `
      <style>
        :host { position: absolute; left: 765px; top: 460px; width: 180px; height: 85px; background: #1e3160; display: flex; align-items: center; color: #d6dbe6; box-sizing: border-box; padding-left: 14px; }
        .t { margin-left: 12px; display: flex; flex-direction: column; }
        .cn { font: 700 24px/28px "Noto Sans CJK SC", sans-serif; letter-spacing: 2px; white-space: nowrap; }
        .en { font: 9.500px/12px "DejaVu Sans", sans-serif; letter-spacing: 1.100px; white-space: nowrap; margin-top: 1px; color: #b4bccd; }
      </style>
      <svg width="36" height="38" viewBox="0 0 36 38" style="flex:none">
        <path d="M8 34c-3 0-5-2-5-5V9c0-3 2-5 5-5M10 4l23 12c2 1 2 4 0 5L12 35" fill="none" stroke="#d0d5e0" stroke-width="2.600" stroke-linecap="round"/>
        <path d="M10 10v19" fill="none" stroke="#d0d5e0" stroke-width="2.600" stroke-linecap="round"/>
        <path d="M15 14l9 5-9 5z" fill="#d0d5e0"/><path d="M25 14v10" stroke="#d0d5e0" stroke-width="1.800"/>
      </svg>
      <div class="t"><div class="cn">溜溜自学</div><div class="en">ZIXUE.3D66.COM</div></div>
    `;
  }
}
customElements.define('cad-watermark', CadWatermark);

class CadApp extends HTMLElement {
  connectedCallback() {
    this.attachShadow({ mode: 'open' });
    this.shadowRoot.innerHTML = `
      <style>
        :host { display: flex; flex-direction: column; position: relative; width: 1000px; height: 559px; overflow: hidden; background: #4a4a4a; filter: blur(.55px); font-family: "Liberation Sans", sans-serif; }
        .mid { display: flex; flex: none; height: 112px; }
        .col { flex: 1; min-width: 0; display: flex; flex-direction: column; background: #565656; }
        .logo { position: absolute; left: 0; top: 0; width: 32px; height: 33px; box-sizing: border-box; background: linear-gradient(#cfcfcf, #8a8a8a); border-right: 1px solid #333; border-bottom: 1px solid #333; }
        .ears { position: absolute; left: 842px; top: 452px; display: flex; gap: 1px; }
        .ears i { width: 13px; height: 13px; border-radius: 50%; background: #b9bcc2; }
      </style>
      <cad-titlebar></cad-titlebar>
      <cad-menubar></cad-menubar>
      <div class="mid">
        <cad-palette></cad-palette>
        <div class="col">
          <cad-tabs></cad-tabs>
          <cad-toolbars></cad-toolbars>
        </div>
      </div>
      <cad-workspace></cad-workspace>
      <cad-command></cad-command>
      <cad-status></cad-status>
      <div class="logo">
        <svg width="30" height="30" viewBox="0 0 30 30">
          <path d="M2 24L12 3h6l4 21h-5l-1-5h-6l-3 5zM12.500 15h3l-1-6z" fill="#c42326" fill-rule="evenodd"/>
          <path d="M25 15h5l-2.500 3z" fill="#333"/>
        </svg>
      </div>
      <cad-dropdown></cad-dropdown>
      <cad-tooltip></cad-tooltip>
      <cad-ime></cad-ime>
      <div class="ears"><i></i><i></i></div>
      <cad-watermark></cad-watermark>
    `;
  }
}
customElements.define('cad-app', CadApp);
</script>
</body>
</html>
